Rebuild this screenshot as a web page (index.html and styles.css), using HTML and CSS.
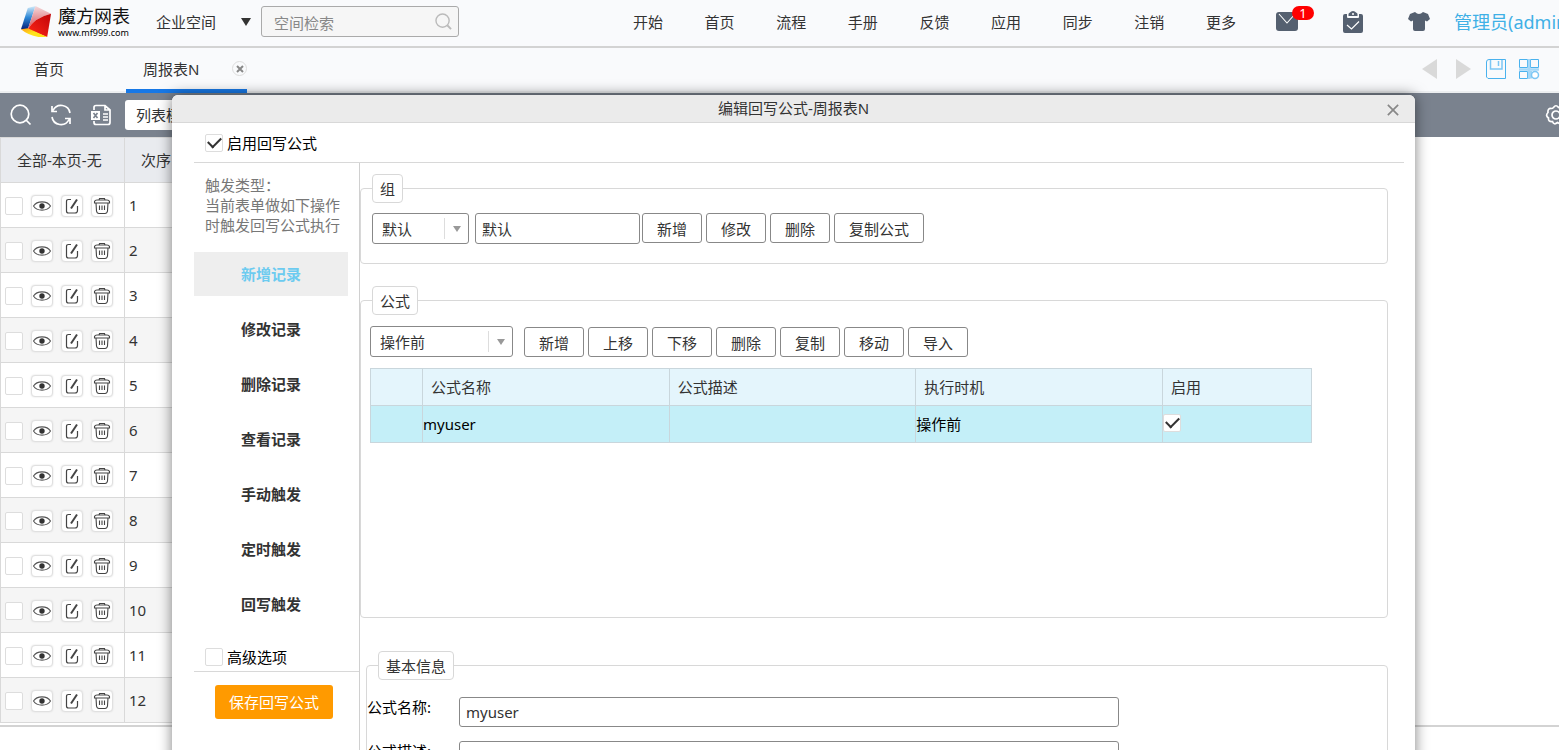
FILE: index.html
```html
<!DOCTYPE html>
<html lang="zh-CN">
<head>
<meta charset="utf-8">
<title>魔方网表</title>
<link rel="stylesheet" href="styles.css">
</head>
<body>
<svg class="defs" aria-hidden="true">
  <symbol id="eye" viewBox="0 0 20 20"><path d="M1.500 10C5 4.500 15 4.500 18.500 10C15 15.500 5 15.500 1.500 10Z" fill="none" stroke="#555" stroke-width="1.100"/><circle cx="10" cy="10" r="2.700" fill="#333"/></symbol>
  <symbol id="edit" viewBox="0 0 20 20"><path d="M9 3.500H6.500Q4.500 3.500 4.500 5.500V15Q4.500 17 6.500 17H13Q15.500 17 15.500 14.500V10" fill="none" stroke="#444" stroke-width="1.200"/><path d="M15 3.500L9 12.500" stroke="#444" stroke-width="2"/></symbol>
  <symbol id="bin" viewBox="0 0 20 20"><path d="M2.500 5.500Q3 4 5 4H15Q17 4 17.500 5.500V7H2.500ZM7 4L7.500 2.500H12.500L13 4M4 7L4.500 15Q5 17.500 7 17.500H13Q15 17.500 15.500 15L16 7M7.500 9.500V14M10 9.500V14M12.500 9.500V14" fill="none" stroke="#444" stroke-width="1.100"/></symbol>
</svg>

<header class="topbar">
  <div class="brand">
    <svg class="brand-mark" viewBox="0 0 32 34" aria-hidden="true">
      <defs>
        <linearGradient id="blue" x1="0" y1="0" x2="0" y2="1"><stop offset="0" stop-color="#d4ecfa"/><stop offset=".5" stop-color="#2c87d6"/><stop offset="1" stop-color="#06217b"/></linearGradient>
        <linearGradient id="pink" x1="0" y1="0" x2="0" y2="1"><stop offset="0" stop-color="#f5dadc"/><stop offset="1" stop-color="#d5525a"/></linearGradient>
        <linearGradient id="red" x1="0" y1="1" x2="1" y2="0"><stop offset="0" stop-color="#ff2818"/><stop offset="1" stop-color="#c00408"/></linearGradient>
        <linearGradient id="gold" x1="0" y1="0" x2="1" y2="1"><stop offset="0" stop-color="#ff9a1a"/><stop offset=".5" stop-color="#ffe31a"/></linearGradient>
      </defs>
      <path d="M7 3L15 1L7 25L0 25Z" fill="url(#blue)"/>
      <path d="M15 1L31 9Q14 13 7 25Z" fill="url(#pink)"/>
      <path d="M31 9L27 33Q17 29 7 25Q14 13 31 9Z" fill="url(#red)"/>
      <path d="M0 25L7 24Q16 28 27 33L18 33Q7 31 0 25Z" fill="url(#gold)"/>
    </svg>
    <div class="brand-text"><span class="brand-name">魔方网表</span><span class="brand-url">www.mf999.com</span></div>
  </div>
  <button class="space" type="button">企业空间<span class="caret"></span></button>
  <label class="search">
    <input type="text" placeholder="空间检索" aria-label="空间检索">
    <svg viewBox="0 0 18 18" aria-hidden="true"><circle cx="8" cy="8" r="7" fill="none" stroke="#bbb" stroke-width="1.500"/><path d="M13 13L17 17" stroke="#bbb" stroke-width="2"/></svg>
  </label>
  <nav class="menu">
    <a href="#">开始</a><a href="#">首页</a><a href="#">流程</a><a href="#">手册</a><a href="#">反馈</a><a href="#">应用</a><a href="#">同步</a><a href="#">注销</a><a href="#">更多</a>
  </nav>
  <div class="status">
    <button class="mail" type="button" aria-label="消息">
      <svg viewBox="0 0 22 19" aria-hidden="true"><rect width="22" height="19" rx="3" fill="#556070"/><path d="M3 2L11 11L19 2" fill="none" stroke="#fff" stroke-width="1.100"/></svg>
      <span class="badge">1</span>
    </button>
    <button class="task" type="button" aria-label="任务">
      <svg viewBox="0 0 20 22" aria-hidden="true"><path d="M2 3H4V6Q4 7 5 7H15Q16 7 16 6V3H18Q20 3 20 5V20Q20 22 18 22H2Q0 22 0 20V5Q0 3 2 3Z" fill="#556070"/><path d="M5.500 5V3Q5.500 2 7 1.500Q8 0 10 0Q12 0 13 1.500Q14.500 2 14.500 3V5Z" fill="#556070"/><circle cx="10" cy="3" r="1" fill="#fff"/><path d="M4 14L8.500 18L16 10.500" fill="none" stroke="#fff" stroke-width="1.200"/></svg>
    </button>
    <button class="skin" type="button" aria-label="皮肤">
      <svg viewBox="0 0 22 19" aria-hidden="true"><path d="M7 0Q11 4 15 0L20 2L22 7L19 9.500L17 8.500V17Q17 19 15 19H7Q5 19 5 17V8.500L3 9.500L0 7L2 2Z" fill="#556070"/></svg>
    </button>
    <a class="user" href="#">管理员(admin)</a>
  </div>
</header>

<div class="tabs">
  <a class="tab" href="#">首页</a>
  <div class="tab active"><a href="#">周报表N</a><button class="tab-close" type="button" aria-label="关闭"><svg viewBox="0 0 8 8"><path d="M1 1L7 7M7 1L1 7" stroke="#888" stroke-width="2"/></svg></button></div>
  <div class="tab-tools">
    <button type="button" aria-label="向左"><svg viewBox="0 0 22 22"><path d="M18 1V21L3 11Z" fill="#d9d9d9"/></svg></button>
    <button type="button" aria-label="向右"><svg viewBox="0 0 22 22"><path d="M4 1V21L19 11Z" fill="#d9d9d9"/></svg></button>
    <button type="button" aria-label="保存"><svg viewBox="0 0 22 22"><path d="M4 1.500H20.500V20.500H3L1.500 19V4Q1.500 1.500 4 1.500Z" fill="none" stroke="#4ab2ee" stroke-width="1"/><path d="M5.500 2V11H17V2M13.500 3V8" fill="none" stroke="#7cc6f4" stroke-width="1.500"/></svg></button>
    <button type="button" aria-label="布局"><svg viewBox="0 0 22 22"><path d="M1.500 1.500H9.500V9.500H1.500ZM12.500 1.500H20.500V9.500H12.500ZM1.500 13.500H9.500V20.500H1.500ZM13 20.500V13" fill="none" stroke="#4ab2ee" stroke-width="1"/><path d="M1 11.500H21M11 1V21" stroke="#a5d8f8" stroke-width="2.500"/><circle cx="17" cy="17" r="3.500" fill="#fff" stroke="#7cc6f4" stroke-width="1.500"/></svg></button>
  </div>
</div>

<div class="toolbar">
  <button type="button" aria-label="查询"><svg viewBox="0 0 22 22"><circle cx="10" cy="10" r="8.800"/><path d="M16 16L20.500 20.500"/></svg></button>
  <button type="button" aria-label="刷新"><svg viewBox="0 0 22 22"><path d="M20 9A9 9 0 0 0 3 6.500M2 2V7.500H7M2 13A9 9 0 0 0 19 15.500M20 20V14.500H15"/></svg></button>
  <button type="button" aria-label="导出"><svg viewBox="0 0 22 22"><path d="M4 6V3.500Q4 1.500 6 1.500H15L20 6V18.500Q20 20.500 18 20.500H6Q4 20.500 4 18.500V17M15 1.500V6H20M13 10H18M13 13H18M13 16H18"/><rect class="plate" x="1" y="7" width="9" height="9"/><path class="cut" d="M3.500 9L7.500 14M7.500 9L3.500 14"/></svg></button>
  <button class="mode" type="button">列表模式</button>
  <button class="gear" type="button" aria-label="设置"><svg viewBox="0 0 22 22"><path d="M8.500 3.500Q11 0 13.500 3.500Q18 2 18 6.500Q22 8.500 19.500 11.500Q21.500 15.500 17 16.500Q16 21 12.500 18.500Q9 21.500 7.500 17.500Q3 18 3.500 14Q0 11.500 3 8.500Q2.500 4 6.500 4.500Q7.500 4.500 8.500 3.500Z"/><circle cx="11" cy="11" r="4"/></svg></button>
</div>

<main class="sheet">
  <table class="records">
    <thead><tr><th class="ops">全部-本页-无</th><th>次序</th></tr></thead>
    <tbody id="rows"></tbody>
  </table>
</main>

<section class="dialog" role="dialog" aria-labelledby="dialog-title">
  <div class="dialog-bar">
    <h1 id="dialog-title">编辑回写公式-周报表N</h1>
    <button type="button" aria-label="关闭"><svg viewBox="0 0 14 14"><path d="M1 1L13 13M13 1L1 13" stroke="#888" stroke-width="2"/></svg></button>
  </div>
  <div class="dialog-body">
    <label class="enable"><input type="checkbox" checked>启用回写公式</label>
    <div class="columns">
      <aside class="side">
        <p class="hint">触发类型：<br>当前表单做如下操作时触发回写公式执行</p>
        <nav class="triggers">
          <a class="current" href="#">新增记录</a><a href="#">修改记录</a><a href="#">删除记录</a><a href="#">查看记录</a><a href="#">手动触发</a><a href="#">定时触发</a><a href="#">回写触发</a>
        </nav>
        <label class="advanced"><input type="checkbox">高级选项</label>
        <div class="save-row"><button class="save" type="button">保存回写公式</button></div>
      </aside>
      <div class="forms">
        <fieldset class="group">
          <legend>组</legend>
          <div class="line">
            <span class="pick"><select aria-label="组"><option>默认</option></select></span>
            <input class="text name" type="text" value="默认" aria-label="组名称">
            <div class="buttons"><button type="button">新增</button><button type="button">修改</button><button type="button">删除</button><button type="button">复制公式</button></div>
          </div>
        </fieldset>
        <fieldset class="formula">
          <legend>公式</legend>
          <div class="line">
            <span class="pick wide"><select aria-label="执行时机"><option>操作前</option></select></span>
            <div class="buttons"><button type="button">新增</button><button type="button">上移</button><button type="button">下移</button><button type="button">删除</button><button type="button">复制</button><button type="button">移动</button><button type="button">导入</button></div>
          </div>
          <table class="formulas">
            <colgroup><col class="c-mark"><col><col><col><col class="c-on"></colgroup>
            <thead><tr><th></th><th>公式名称</th><th>公式描述</th><th>执行时机</th><th>启用</th></tr></thead>
            <tbody><tr><td></td><td>myuser</td><td></td><td>操作前</td><td><input type="checkbox" checked aria-label="启用"></td></tr></tbody>
          </table>
        </fieldset>
        <fieldset class="basic">
          <legend>基本信息</legend>
          <div class="field"><label for="f-name">公式名称:</label><input class="text" id="f-name" type="text" value="myuser"></div>
          <div class="field"><label for="f-desc">公式描述:</label><input class="text" id="f-desc" type="text"></div>
        </fieldset>
      </div>
    </div>
  </div>
</section>
<script src="rows.js"></script>
</body>
</html>
```
FILE: rows.js
```js
const icon = (id, label) =>
  `<button type="button" aria-label="${label}"><svg><use href="#${id}"/></svg></button>`;
const rows = [];
for (let n = 1; n <= 12; n++) {
  rows.push(`<tr><td><div class="actions"><input type="checkbox" aria-label="选择 ${n}">${
    icon("eye", "查看")}${icon("edit", "编辑")}${icon("bin", "删除")}</div></td><td>${n}</td></tr>`);
}
document.getElementById("rows").innerHTML = rows.join("");
```
FILE: styles.css
```css
* { box-sizing: border-box; }
html, body { height: 100%; }
body {
  margin: 0;
  overflow: hidden;
  position: relative;
  background: #fff;
  color: #333;
  font: 15px/20px "Noto Sans", "Noto Sans CJK SC", sans-serif;
}
button, input, select { font: inherit; color: inherit; margin: 0; }
button { padding: 0; border: 0; background: none; cursor: pointer; }
a { color: inherit; text-decoration: none; white-space: nowrap; }
svg { display: block; }
.defs { position: absolute; width: 0; height: 0; }

input[type="checkbox"] {
  appearance: none;
  flex: none;
  display: inline-grid;
  place-items: center;
  width: 18px;
  height: 18px;
  border: 1px solid #ddd;
  border-radius: 2px;
  background: #fff;
}
input[type="checkbox"]:checked::before {
  content: "";
  width: 11px;
  height: 6px;
  border: solid #333;
  border-width: 0 0 2px 2px;
  transform: translateY(-2px) rotate(-45deg);
}

.topbar {
  display: flex;
  align-items: center;
  height: 48px;
  padding: 0 0 3px 21px;
  border-bottom: 2px solid #d3d3d3;
  background: #f9fafc;
}
.brand { display: flex; align-items: center; gap: 6px; flex: none; width: 135px; }
.brand-mark { width: 31px; height: 33px; }
.brand-text { display: flex; flex-direction: column; color: #111; white-space: nowrap; }
.brand-name { font-size: 18px; line-height: 22px; }
.brand-url { font: 9px/12px "Noto Sans", sans-serif; color: #000; }
.space { display: flex; align-items: center; justify-content: space-between; flex: none; width: 95px; }
.caret { border: 5px solid transparent; border-top: 8px solid #333; border-bottom: 0; }
.search { position: relative; flex: none; width: 198px; margin-left: 10px; }
.search input {
  width: 100%;
  height: 31px;
  padding: 2px 12px 0;
  border: 1px solid #aaa;
  border-radius: 3px;
  background: #f6f6f6;
}
.search input::placeholder { color: #888; }
.search svg { position: absolute; right: 7px; top: 7px; width: 17px; height: 17px; }
.menu { display: flex; justify-content: space-between; width: 603px; margin-left: auto; }
.status { display: flex; align-items: center; flex: none; width: 323px; padding-left: 40px; }
.status button { position: relative; flex: none; }
.mail svg, .skin svg { width: 22px; height: 19px; }
.task svg { width: 20px; height: 22px; }
.task { margin-left: 45px; }
.skin { margin-left: 45px; }
.badge {
  position: absolute;
  left: 16px;
  top: -6px;
  width: 22px;
  border-radius: 7px;
  background: #f00;
  color: #fff;
  font-size: 13px;
  line-height: 14px;
}
.user { margin-left: 24px; color: #3fb0e6; font-size: 18px; line-height: 24px; }

.tabs {
  display: flex;
  height: 45px;
  border-bottom: 2px solid #eceef0;
  background: #f9fafc;
}
.tab { display: flex; align-items: center; padding: 0 0 2px 34px; width: 126px; }
.tab.active { justify-content: space-between; width: 121px; padding: 2px 0 2px 17px; margin-bottom: -2px; border-bottom: 4px solid #1778e6; }
.tab-close { display: grid; place-items: center; width: 15px; height: 15px; border: 1px solid #ddd; border-radius: 50%; }
.tab-close svg { width: 8px; height: 8px; }
.tab-tools { display: flex; align-items: center; gap: 11px; margin-left: auto; padding: 0 19px 1px 0; }
.tab-tools svg { width: 22px; height: 22px; }

.toolbar { display: flex; align-items: center; gap: 18px; height: 44px; padding-left: 10px; background: #7a828e; }
.toolbar svg { width: 22px; height: 22px; fill: none; stroke: #fff; stroke-width: 1.700; }
.toolbar .plate { fill: #fff; stroke: none; }
.toolbar .cut { stroke: #7a828e; }
.toolbar .mode { width: 100px; height: 30px; margin-left: -5px; padding-left: 11px; border-radius: 3px; background: #fff; text-align: left; white-space: nowrap; }
.toolbar .gear { margin: 0 -8px 0 auto; }

.sheet { border-bottom: 2px solid #d3d3d3; height: 590px; }
.records { width: 100%; max-width: 1415px; table-layout: fixed; border-collapse: collapse; }
.records tr { height: 45px; }
.records th, .records td { padding: 0 4px; border: 1px solid #d9d9d9; text-align: left; }
.records th { height: 45px; padding-left: 16px; background: #e9ebef; font-weight: 400; }
.records .ops { width: 124px; white-space: nowrap; }
.records tbody tr:nth-child(even) { background: #f5f5f5; }
.actions { display: flex; align-items: center; gap: 8px; padding-top: 1px; }
.actions button {
  display: grid;
  place-items: center;
  width: 22px;
  height: 22px;
  border: 1px solid #e0e0e0;
  border-radius: 4px;
  background: #fff;
  box-shadow: 0 0 2px #ddd;
}
.actions svg { width: 20px; height: 20px; }

.dialog {
  position: absolute;
  left: 172px;
  right: 144px;
  top: 95px;
  border-radius: 6px 6px 0 0;
  background: #fff;
  box-shadow: 0 0 14px rgba(0, 0, 0, 0.5);
}
.dialog-bar {
  position: relative;
  height: 28px;
  border-bottom: 1px solid #d8d8d8;
  border-radius: 6px 6px 0 0;
  background: #ebebeb;
  text-align: center;
}
.dialog-bar h1 { margin: 0; font-size: 15px; line-height: 27px; font-weight: 400; }
.dialog-bar button { position: absolute; right: 16px; top: 9px; }
.dialog-bar svg { width: 12px; height: 12px; }
.dialog-body { padding: 0 11px 0 22px; }
.enable, .advanced { display: flex; align-items: center; gap: 4px; padding-left: 11px; color: #000; }
.enable { height: 40px; border-bottom: 1px solid #d8d8d8; }
.columns { display: flex; }
.side { flex: none; width: 166px; border-right: 1px solid #d0d0d0; }
.hint { margin: 12px 11px 17px; color: #777; }
.triggers { display: grid; gap: 11px; margin-right: 11px; }
.triggers a { font-weight: 700; line-height: 44px; text-align: center; }
.triggers .current { background: #eee; color: #6ccbf0; }
.advanced { height: 46px; padding-top: 16px; border-bottom: 1px solid #d8d8d8; }
.save-row { height: 100px; padding: 13px 21px; }
.save { width: 118px; height: 34px; border-radius: 3px; background: #ff9a00; color: #fff; }

.forms { flex: 1; min-width: 0; padding: 11px 16px 0 0; }
fieldset { min-width: 0; margin: 0; padding: 0; border: 1px solid #d8d8d8; border-radius: 4px; }
legend { height: 29px; padding: 1px 7px 0; border: 1px solid #d8d8d8; border-radius: 4px; line-height: 27px; }
.group { padding: 10px 11px 19px; }
.formula { min-height: 332px; margin-top: 22px; padding: 11px 9px; }
.formula legend { margin-left: 2px; }
.basic { margin: 33px 0 0 6px; padding-top: 17px; }
.basic legend { margin-left: 11px; }
.line { display: flex; align-items: flex-end; }
.pick { position: relative; width: 97px; height: 31px; border: 1px solid #888; border-radius: 3px; }
.pick.wide { width: 143px; margin-right: 11px; }
.pick select { appearance: none; width: 100%; height: 100%; padding: 0 9px; border: 0; background: none; }
.pick::before { content: ""; position: absolute; right: 23px; top: 4px; bottom: 4px; border-left: 1px solid #ddd; }
.pick::after { content: ""; position: absolute; right: 7px; top: 12px; border: 4px solid transparent; border-top: 6px solid #999; border-bottom: 0; }
.text { height: 31px; padding: 0 6px; border: 1px solid #888; border-radius: 3px; background: #fff; }
.name { width: 165px; margin: 0 2px 0 6px; }
.buttons { display: flex; gap: 4px; }
.buttons button { height: 30px; min-width: 60px; padding: 2px 14px 0; border: 1px solid #888; border-radius: 3px; background: #fff; }
.group .buttons { margin-bottom: 1px; }
.formulas { width: calc(100% - 66px); margin-top: 11px; table-layout: fixed; border-collapse: collapse; }
.formulas tr { height: 37px; }
.formulas th, .formulas td { padding: 0; border: 1px solid #c9d6dc; text-align: left; font-weight: 400; }
.formulas th { padding-left: 8px; background: #e4f5fc; }
.formulas td { background: #c4eff8; color: #000; }
.formulas input { vertical-align: middle; }
.formulas td:last-child { padding-bottom: 4px; }
.c-mark { width: 52px; }
.c-on { width: 149px; }
.field { display: flex; margin-bottom: 14px; color: #000; }
.field label { width: 92px; }
.field .text { width: calc(100% - 360px); height: 30px; color: #333; }
```
